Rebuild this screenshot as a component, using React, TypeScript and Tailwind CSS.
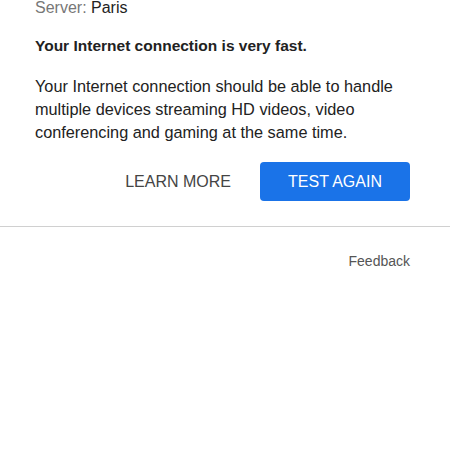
export default function App() {
  return (
    <div className="w-[450px] h-[450px] bg-white overflow-hidden" style={{ fontFamily: '"Liberation Sans", Arial, sans-serif' }}>
      <div className="pl-[35px] pr-[40px] -mt-[4px]">
        <div className="text-[16px] leading-[23px] text-[#777]">
          Server: <span className="text-[#222]">Paris</span>
        </div>
        <p className="mt-[15px] text-[15.5px] leading-[23px] font-bold text-[#222]">
          Your Internet connection is very fast.
        </p>
        <p className="mt-[18px] text-[16.3px] leading-[23px] text-[#222]">
          Your Internet connection should be able to handle multiple devices streaming HD videos, video conferencing and gaming at the same time.
        </p>
        <div className="mt-[18px] flex items-center justify-end gap-[29px] pb-[25px]">
          <button className="text-[16px] text-[#444]">LEARN MORE</button>
          <button className="w-[150px] h-[39px] rounded-[4px] bg-[#1a73e8] text-white text-[16px]">
            TEST AGAIN
          </button>
        </div>
      </div>
      <div className="border-t border-[#d0d0d0]" />
      <div className="flex justify-end px-[40px] pt-[24px]">
        <span className="text-[14px] text-[#555]">Feedback</span>
      </div>
    </div>
  );
}
